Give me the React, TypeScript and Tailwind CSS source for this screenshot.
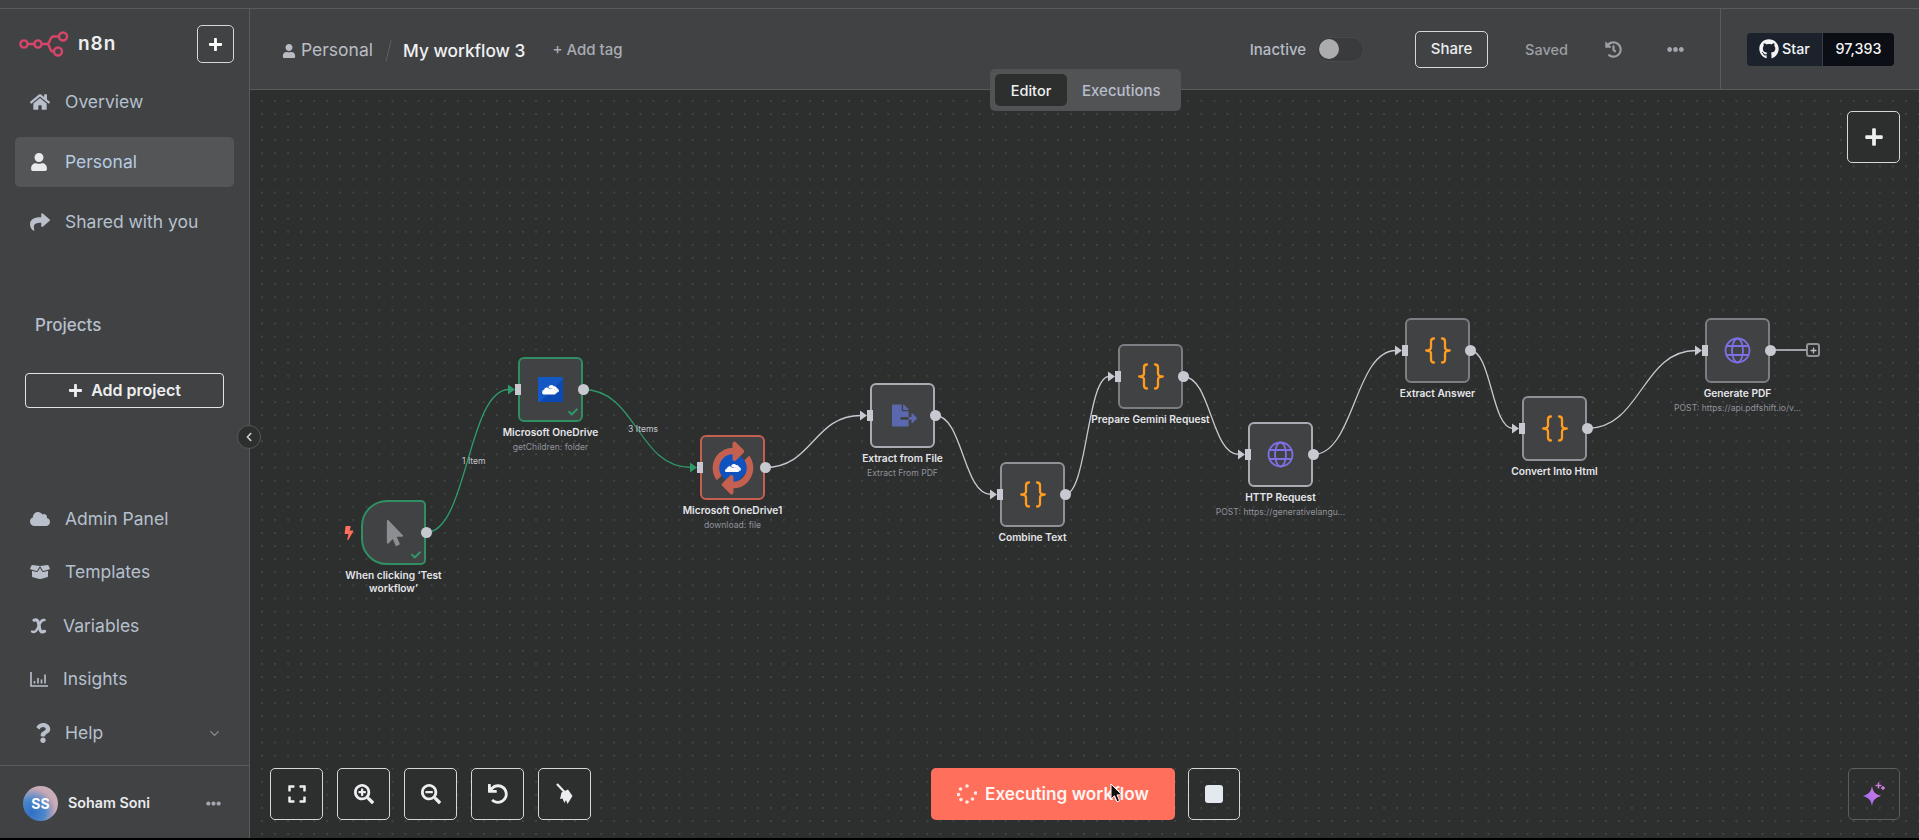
import React from "react";
import {
  FaHome, FaUser, FaShare, FaCloud, FaBoxOpen, FaQuestion, FaChevronLeft, FaPlus, FaHistory,
  FaEllipsisH, FaGithub, FaExpand, FaSearchPlus, FaSearchMinus, FaUndo, FaBolt,
  FaMousePointer, FaCheck, FaSyncAlt, FaFileExport,
} from "react-icons/fa";
import { LuChevronDown } from "react-icons/lu";

const OX = 250;
const OY = 90;

const Logo = () => (
  <svg width="50" height="26" viewBox="0 0 50 26" fill="none" stroke="#d8456a" strokeWidth="2.4">
    <circle cx="5" cy="13" r="3.6" />
    <circle cx="19" cy="13" r="3.6" />
    <circle cx="44" cy="5.5" r="4" />
    <circle cx="39" cy="20.5" r="4" />
    <path d="M8.6 13h6.8M22.6 13h5.4c3 0 3-7.5 6-7.5h6M28 13c3 0 2.5 7.5 5.5 7.5h1.5" />
  </svg>
);

const VariableIcon = () => (
  <svg width="17" height="18" viewBox="0 0 17 18" fill="none" stroke="#b9c0cb" strokeLinecap="round">
    <path d="M4 3.2c3-1.200 4 .5 4.600 3.300l1 5c.6 3 2 4.200 5 2.800" strokeWidth="3.200" />
    <path d="M14.500 3c-2.500-.6-3.600 1-5.400 5.200C7.500 12 5.500 16.500 2 14.500" strokeWidth="2.400" />
  </svg>
);

const InsightsIcon = () => (
  <svg width="18" height="15" viewBox="0 0 18 15" fill="none" stroke="#b9c0cb" strokeWidth="1.6">
    <path d="M1 0v14h17" />
    <path d="M4.500 9v2.500M8 6v5.500M11.500 7.500v4M15 2.500v9" />
  </svg>
);

const Broom = () => (
  <svg width="20" height="22" viewBox="0 0 20 22" fill="#eceef0">
    <path d="M2 1l7.500 8" stroke="#eceef0" strokeWidth="2.200" fill="none" />
    <path d="M6.500 9.500L13 6.500 17.500 13 12.500 21 11 17 9.500 20 7.500 15.500 5 16z" />
  </svg>
);

const Braces = () => (
  <svg width="26" height="27" viewBox="0 0 26 27" fill="none" stroke="#ff9b1f" strokeWidth="2.300" strokeLinecap="round" strokeLinejoin="round">
    <path d="M9 1.500c-2.200 0-3 1-3 3v6c0 1.800-1.300 2.800-4.800 3 3.500.2 4.800 1.200 4.800 3v6c0 2 .8 3 3 3" />
    <path d="M17 1.500c2.200 0 3 1 3 3v6c0 1.800 1.300 2.800 4.800 3-3.500.2-4.800 1.200-4.800 3v6c0 2-.8 3-3 3" />
  </svg>
);

const Globe = () => (
  <svg width="27" height="27" viewBox="0 0 27 27" fill="none" stroke="#7d70e3" strokeWidth="1.800">
    <circle cx="13.500" cy="13.500" r="12" />
    <ellipse cx="13.500" cy="13.500" rx="5.500" ry="12" />
    <path d="M2.500 9h22M2.500 18h22" />
  </svg>
);

const CloudWhite = ({ s = 17 }: { s?: number }) => (
  <svg width={s} height={s * 0.62} viewBox="0 0 24 15" fill="#fff">
    <path d="M9 4.500c1-3 5.500-4.200 7.800-1.300 2-.3 4 1 4.200 3 1.600.4 3 1.800 3 3.700 0 .6-.2 1.200-.4 1.700l-7.100-4.400c-1.500-1-3.400-1.100-5-.3L9 4.500z" />
    <path d="M3.400 15C1.500 15 0 13.500 0 11.600c0-1.800 1.300-3.200 3-3.400.3-2.500 3.400-4 5.700-2.500l2.800 1.700c1.300-1.300 3.200-1.400 4.500-.6l6.800 4.400-4.600 3.800H3.400z" />
  </svg>
);

const OneDrive = () => (
  <div className="relative flex h-[25px] w-[25px] items-center justify-center bg-[#1458c6]">
    <div className="absolute right-0 bottom-0 h-0 w-0 border-b-[23px] border-l-[23px] border-b-[#0b4ab4] border-l-transparent" />
    <div className="relative flex">
      <CloudWhite />
    </div>
  </div>
);

const Executing = () => (
  <div className="relative flex h-[50px] w-[42px] items-center justify-center">
    <div className="absolute h-[27px] w-[27px] rotate-45 rounded-[4px] bg-[#1052bf]" />
    <FaSyncAlt className="absolute rotate-[-45deg] text-[42px] text-[#c4604f]" />
    <div className="relative flex">
      <CloudWhite s={16} />
    </div>
  </div>
);

type NodeDef = {
  x: number;
  y: number;
  label: string;
  sub?: string;
  border: string;
  icon: React.ReactNode;
  trigger?: boolean;
  ok?: boolean;
};

const BORDER_LIGHT = "border-[#a9adb3]";
const BORDER_MID = "border-[#8f9297]";
const BORDER_DIM = "border-[#7b7e82]";
const BORDER_GREEN = "border-[#2f8f63]";
const BORDER_RED = "border-[#c4604f]";

const nodes: NodeDef[] = [
  { x: 361, y: 500, label: "When clicking ‘Test workflow’", border: BORDER_GREEN, trigger: true, ok: true, icon: <FaMousePointer className="ml-[2px] text-[26px] text-[#8c8e91]" /> },
  { x: 518, y: 357, label: "Microsoft OneDrive", sub: "getChildren: folder", border: BORDER_GREEN, ok: true, icon: <OneDrive /> },
  { x: 700, y: 435, label: "Microsoft OneDrive1", sub: "download: file", border: BORDER_RED, icon: <Executing /> },
  { x: 870, y: 383, label: "Extract from File", sub: "Extract From PDF", border: BORDER_LIGHT, icon: <FaFileExport className="ml-[4px] text-[25px] text-[#5a69ae]" /> },
  { x: 1000, y: 462, label: "Combine Text", border: BORDER_MID, icon: <Braces /> },
  { x: 1118, y: 344, label: "Prepare Gemini Request", border: BORDER_DIM, icon: <Braces /> },
  { x: 1248, y: 422, label: "HTTP Request", sub: "POST: https://generativelangu...", border: BORDER_LIGHT, icon: <Globe /> },
  { x: 1405, y: 318, label: "Extract Answer", border: BORDER_DIM, icon: <Braces /> },
  { x: 1522, y: 396, label: "Convert Into Html", border: BORDER_MID, icon: <Braces /> },
  { x: 1705, y: 318, label: "Generate PDF", sub: "POST: https://api.pdfshift.io/v...", border: BORDER_DIM, icon: <Globe /> },
];

const GREEN = "#2f9a69";
const GREY = "#c6cad0";

const edges = [
  { a: 0, b: 1, c: GREEN },
  { a: 1, b: 2, c: GREEN },
  { a: 2, b: 3, c: GREY },
  { a: 3, b: 4, c: GREY },
  { a: 4, b: 5, c: GREY },
  { a: 5, b: 6, c: GREY },
  { a: 6, b: 7, c: GREY },
  { a: 7, b: 8, c: GREY },
  { a: 8, b: 9, c: GREY },
];

const NavItem = ({ icon, label, iconW = "w-[35px]", active }: { icon: React.ReactNode; label: string; iconW?: string; active?: boolean }) => (
  <div className={`flex h-[50px] items-center rounded-[5px] pl-[15px] ${active ? "bg-[#545557]" : ""}`}>
    <span className={`flex ${iconW} shrink-0 items-center`}>{icon}</span>
    <span className={`text-[17.500px] ${active ? "text-[#b6cbe2]" : "text-[#b6c0cd]"}`}>{label}</span>
  </div>
);

const ToolBtn = ({ children, w = "w-[53px]" }: { children: React.ReactNode; w?: string }) => (
  <div className={`flex h-[52px] ${w} items-center justify-center rounded-[5px] border border-[#d5d7da] bg-[#2d2e2e] text-[20px] text-[#eceef0]`}>
    {children}
  </div>
);

const Node = ({ n }: { n: NodeDef }) => (
  <div className="absolute h-[65px] w-[65px]" style={{ left: n.x - OX, top: n.y - OY }}>
    <div className={`relative flex h-full w-full items-center justify-center border-2 bg-[#414244] ${n.border} ${n.trigger ? "rounded-l-[26px] rounded-r-[5px]" : "rounded-[6px]"}`}>
      {n.icon}
      {n.ok && <FaCheck className="absolute right-[3px] bottom-[3px] text-[10px] text-[#2f9a69]" />}
    </div>
    {!n.trigger && <div className="absolute top-[27px] left-[-3px] h-[11px] w-[6px] bg-[#c6cad0]" />}
    <div className="absolute top-[27px] left-[59.500px] h-[11px] w-[11px] rounded-full bg-[#c6cad0]" />
    <div className="absolute top-[69px] left-1/2 flex w-[160px] -translate-x-1/2 flex-col items-center text-center">
      <div className={`text-[10.200px] leading-[13px] font-semibold text-[#e4e6e9] ${n.trigger ? "w-[105px]" : "whitespace-nowrap"}`}>{n.label}</div>
      {n.sub && <div className="mt-[2px] text-[8.600px] leading-[12px] whitespace-nowrap text-[#8f949b]">{n.sub}</div>}
    </div>
  </div>
);

const edgePath = (x1: number, y1: number, x2: number, y2: number) => {
  const h = (x2 - x1) / 2;
  return `M${x1} ${y1}C${x1 + h} ${y1} ${x2 - h} ${y2} ${x2} ${y2}`;
};

export default function App() {
  return (
    <div className="flex h-[840px] w-full flex-col overflow-hidden border-b-2 border-black bg-[#414244] font-['Inter',sans-serif]">
      <div className="h-[9px] shrink-0 border-b border-[#585a5c]" />
      <div className="flex min-h-0 flex-1">
        {/* Sidebar */}
        <aside className="relative flex w-[250px] shrink-0 flex-col border-r border-[#585a5c]">
          <div className="flex items-center pt-[16px] pr-[15px] pl-[19px]">
            <Logo />
            <span className="ml-[9px] text-[19px] font-semibold tracking-[1px] text-[#eceef0]">n8n</span>
            <div className="ml-auto flex h-[38px] w-[37px] items-center justify-center rounded-[5px] border border-[#d5d7da] text-[15px] text-white">
              <FaPlus />
            </div>
          </div>
          <nav className="mt-[14px] mr-[15px] ml-[15px] flex flex-col gap-[10px]">
            <NavItem icon={<FaHome className="text-[20px] text-[#b9c0cb]" />} label="Overview" />
            <NavItem active icon={<FaUser className="text-[18px] text-[#e8ebee]" />} label="Personal" />
            <NavItem icon={<FaShare className="text-[20px] text-[#b9c0cb]" />} label="Shared with you" />
          </nav>
          <div className="mt-[66px] pl-[35px] text-[17px] font-medium text-[#b6c0cd]">Projects</div>
          <div className="mt-[34px] mr-[25px] ml-[25px] flex h-[35px] items-center justify-center gap-[8px] rounded-[4px] border border-[#e2e4e7] text-[16px] font-semibold text-[#eceef0]">
            <FaPlus className="text-[15px]" />
            Add project
          </div>
          <div className="mt-auto flex flex-col gap-[3.600px] pr-[15px] pl-[15px]">
            <NavItem icon={<FaCloud className="text-[20px] text-[#b9c0cb]" />} label="Admin Panel" />
            <NavItem icon={<FaBoxOpen className="text-[20px] text-[#b9c0cb]" />} label="Templates" />
            <NavItem iconW="w-[33px]" icon={<VariableIcon />} label="Variables" />
            <NavItem iconW="w-[33px]" icon={<InsightsIcon />} label="Insights" />
            <div className="relative">
              <NavItem icon={<FaQuestion className="ml-[3px] text-[20px] text-[#b9c0cb]" />} label="Help" />
              <LuChevronDown className="absolute top-[18px] right-[12px] text-[15px] text-[#8b8f95]" />
            </div>
          </div>
          <div className="mt-[7px] flex h-[73px] items-center border-t border-[#585a5c] pt-[2px] pr-[28px] pl-[23px]">
            <div className="flex h-[35px] w-[35px] items-center justify-center rounded-full bg-[radial-gradient(circle_at_25%_75%,#2f6fc4_0%,#4d86c9_35%,#c9a9b5_65%,#c7bcc0_100%)] text-[14px] font-bold text-white">
              SS
            </div>
            <span className="ml-[10px] text-[14.300px] font-semibold text-[#e8eaed]">Soham Soni</span>
            <FaEllipsisH className="ml-auto text-[15px] text-[#a3a7ad]" />
          </div>
          <div className="absolute top-[416px] right-[-12px] z-10 flex h-[24px] w-[24px] items-center justify-center rounded-full border border-[#55575a] bg-[#2d2e2e] text-[10px] text-[#c9ccd1]">
            <FaChevronLeft />
          </div>
        </aside>

        {/* Main */}
        <main className="relative flex min-w-0 flex-1 flex-col">
          <header className="flex h-[81px] shrink-0 items-center border-b border-[#585a5c] pl-[32px]">
            <div className="mt-[3px] flex items-center">
              <FaUser className="text-[14px] text-[#b9bdc3]" />
              <span className="ml-[5px] text-[17.500px] text-[#b9bdc3]">Personal</span>
              <span className="mr-[14px] ml-[15px] h-[22px] w-[1px] rotate-[14deg] bg-[#5d5f62]" />
              <span className="text-[17.300px] font-medium text-[#f0f1f3]">My workflow 3</span>
              <span className="ml-[27px] text-[15px] font-medium text-[#a8acb2]">+ Add tag</span>
            </div>

            <div className="ml-auto flex h-full items-center">
              <span className="mt-[2px] text-[15px] font-medium text-[#b6bcc6]">Inactive</span>
              <div className="ml-[10px] flex h-[25px] w-[48px] items-center rounded-full border border-[#47484a] bg-[#3a3b3c] pl-[2px]">
                <div className="h-[20px] w-[20px] rounded-full bg-[#ababb0]" />
              </div>
              <div className="ml-[51px] flex h-[37px] w-[73px] items-center justify-center rounded-[5px] border border-[#d5d7da] text-[15px] font-medium text-[#eceef0]">
                Share
              </div>
              <span className="mt-[2px] ml-[37px] text-[14.500px] font-medium text-[#9b9fa5]">Saved</span>
              <FaHistory className="ml-[37px] text-[17px] text-[#9b9fa5]" />
              <FaEllipsisH className="ml-[45px] text-[17px] text-[#a3a7ad]" />
              <div className="ml-[36px] flex h-full w-[199px] items-center border-l border-[#585a5c] pl-[26px]">
                <div className="flex h-[33px] w-[147px] overflow-hidden rounded-[4px] text-[#f3f4f6]">
                  <div className="flex w-[76px] items-center justify-center gap-[3px] border-r border-[#3a3f46] bg-[#1b222c] text-[14.300px] font-medium">
                    <FaGithub className="text-[20px]" />
                    Star
                  </div>
                  <div className="flex flex-1 items-center justify-center bg-[#0b0e14] text-[14.300px] font-medium">97,393</div>
                </div>
              </div>
            </div>
          </header>

          <div className="relative min-h-0 flex-1 bg-[#2d2e2e] bg-[radial-gradient(circle,#5c5e60_0.5px,transparent_0.8px)] bg-[size:13.050px_13.100px] bg-[position:5.500px_4.300px]">
            <svg className="absolute top-0 left-0 h-full w-full" fill="none">
              <g transform={`translate(${-OX} ${-OY})`}>
                {edges.map((e) => {
                  const s = nodes[e.a];
                  const t = nodes[e.b];
                  const x1 = s.x + 65;
                  const y1 = s.y + 32.5;
                  const x2 = t.x - 9;
                  const y2 = t.y + 32.5;
                  return (
                    <g key={e.a}>
                      <path d={edgePath(x1, y1, x2, y2)} stroke={e.c} strokeWidth="1.300" />
                      <path d={`M${x2 - 1} ${y2 - 5}L${x2 + 6} ${y2}L${x2 - 1} ${y2 + 5}z`} fill={e.c} />
                    </g>
                  );
                })}
                <path d="M1770 350H1806" stroke={GREY} strokeWidth="1.300" />
              </g>
            </svg>

            <span className="absolute top-[365px] left-[212px] text-[8.600px] leading-[12px] text-[#c3c7cc]">1 Item</span>
            <span className="absolute top-[333px] left-[378px] text-[8.600px] leading-[12px] text-[#c3c7cc]">3 Items</span>

            <FaBolt className="absolute top-[436px] left-[92px] text-[14px] text-[#ff6f5c]" />

            {nodes.map((n) => (
              <Node key={n.label} n={n} />
            ))}

            <div className="absolute top-[253px] left-[1556px] flex h-[14px] w-[14px] items-center justify-center rounded-[3px] border-2 border-[#8f9297] text-[7px] text-[#b9bdc3]">
              <FaPlus />
            </div>

            <div className="absolute top-[21px] right-[19px]">
              <ToolBtn>
                <FaPlus />
              </ToolBtn>
            </div>

            <div className="absolute bottom-[18px] left-[20px] flex gap-[14px]">
              <ToolBtn><FaExpand /></ToolBtn>
              <ToolBtn><FaSearchPlus /></ToolBtn>
              <ToolBtn><FaSearchMinus /></ToolBtn>
              <ToolBtn><FaUndo /></ToolBtn>
              <ToolBtn><Broom /></ToolBtn>
            </div>

            <div className="absolute bottom-[18px] left-[681px] flex gap-[13px]">
              <div className="flex h-[52px] w-[244px] items-center justify-center gap-[8px] rounded-[5px] bg-[#ff6f5c] text-[17.200px] font-semibold text-[#fff5f2]">
                <svg width="20" height="20" viewBox="0 0 20 20" fill="#fbe9e4">
                  <circle cx="10" cy="2" r="1.800" />
                  <circle cx="3.500" cy="5" r="1.800" />
                  <circle cx="1.500" cy="10.500" r="1.800" />
                  <circle cx="4" cy="15.500" r="1.800" />
                  <circle cx="10" cy="18" r="1.800" />
                  <circle cx="15.500" cy="15" r="1.800" />
                  <circle cx="18.500" cy="9" r="1.800" />
                </svg>
                Executing workflow
              </div>
              <div className="flex h-[52px] w-[52px] items-center justify-center rounded-[5px] border border-[#d5d7da]">
                <div className="h-[18px] w-[18px] rounded-[3px] bg-[#e4e9f0]" />
              </div>
            </div>

            <div className="absolute right-[19px] bottom-[18px] flex h-[52px] w-[52px] items-center justify-center rounded-[5px] border border-[#5a5c5e]">
              <svg width="24" height="24" viewBox="0 0 24 24">
                <defs>
                  <linearGradient id="sp" x1="0" y1="1" x2="1" y2="0">
                    <stop offset="0" stopColor="#8f6dff" />
                    <stop offset="1" stopColor="#e07ad6" />
                  </linearGradient>
                </defs>
                <path d="M10 4c1 6 3 8 9 10-6 2-8 4-9 10-1-6-3-8-9-10 6-2 8-4 9-10z" fill="url(#sp)" />
                <path d="M16.500 0.500v6M13.500 3.500h6M21 4v4M19 6h4" stroke="#d27ae0" strokeWidth="1.500" fill="none" />
              </svg>
            </div>
          </div>

          {/* Editor / Executions tabs */}
          <div className="absolute top-[60px] left-[740px] flex h-[42px] w-[191px] items-center rounded-[5px] bg-[#525355] pl-[5px]">
            <div className="flex h-[32px] w-[72px] items-center justify-center rounded-[5px] bg-[#2d2e2e] pt-[1px] text-[14.500px] font-medium text-[#f0f1f3]">Editor</div>
            <div className="ml-[15px] pt-[2px] text-[15px] font-medium text-[#b8bdca]">Executions</div>
          </div>

          {/* Captured mouse pointer */}
          <svg className="absolute top-[774px] left-[860px]" width="14" height="20" viewBox="0 0 14 20">
            <path d="M1 1v15l3.500-3.200 2.500 6 2.600-1.100-2.500-5.800H12z" fill="#111" stroke="#fff" strokeWidth="1" />
          </svg>
        </main>
      </div>
    </div>
  );
}
